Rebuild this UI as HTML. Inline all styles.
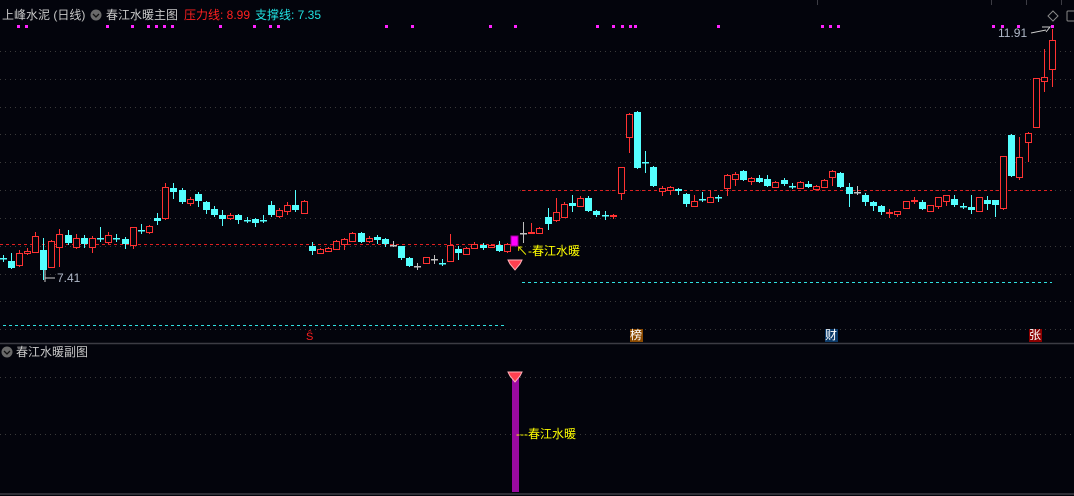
<!DOCTYPE html>
<html><head><meta charset="utf-8"><style>
html,body{margin:0;padding:0;background:#03040c;width:1074px;height:496px;overflow:hidden;font-family:"Liberation Sans","Noto Sans CJK SC",sans-serif}
svg{position:absolute;left:0;top:0}
.t{position:absolute;font-size:12px;white-space:nowrap;line-height:14px}
</style></head><body>
<svg id="s" width="1074" height="496" xmlns="http://www.w3.org/2000/svg">
<g stroke="#3a3a3a" stroke-dasharray="1 4" stroke-width="1">
<line x1="0" y1="51.5" x2="1074" y2="51.5"/><line x1="0" y1="79.5" x2="1074" y2="79.5"/>
<line x1="0" y1="107.5" x2="1074" y2="107.5"/><line x1="0" y1="134.5" x2="1074" y2="134.5"/>
<line x1="0" y1="162.5" x2="1074" y2="162.5"/><line x1="0" y1="190.5" x2="1074" y2="190.5"/>
<line x1="0" y1="218.5" x2="1074" y2="218.5"/><line x1="0" y1="246.5" x2="1074" y2="246.5"/>
<line x1="0" y1="274.5" x2="1074" y2="274.5"/><line x1="0" y1="301.5" x2="1074" y2="301.5"/>
<line x1="0" y1="329.5" x2="1074" y2="329.5"/>
<line x1="0" y1="377.5" x2="1074" y2="377.5"/><line x1="0" y1="434.5" x2="1074" y2="434.5"/>
</g>
<line x1="0" y1="343.5" x2="1074" y2="343.5" stroke="#3c3c44" stroke-width="1.5"/>
<line x1="0" y1="494" x2="1074" y2="494" stroke="#3c3c44" stroke-width="1.5"/>
<g stroke="#3c3c44"><line x1="817.5" y1="0" x2="817.5" y2="5"/><line x1="991.5" y1="0" x2="991.5" y2="5"/><line x1="1026.5" y1="0" x2="1026.5" y2="5"/><line x1="1061.5" y1="0" x2="1061.5" y2="5"/></g>
<line x1="0" y1="244.5" x2="510" y2="244.5" stroke="#e02020" stroke-dasharray="3 3"/>
<line x1="522" y1="190.5" x2="1052" y2="190.5" stroke="#e02020" stroke-dasharray="3 3"/>
<line x1="522" y1="282.5" x2="1052" y2="282.5" stroke="#30e0e0" stroke-dasharray="3 3"/>
<line x1="3" y1="325.5" x2="505" y2="325.5" stroke="#30e0e0" stroke-dasharray="3 3"/>
<g id="c"></g>
<g fill="#ff22ff" id="d"></g>
<rect x="511" y="236" width="7" height="10" fill="#ff00ff" stroke="#a000a0"/>
<rect x="512" y="378" width="7" height="114" fill="#9a0aa0"/>
<path d="M508 260 L522 260 L520 264 L515 270 L510 264 Z" fill="#ff4050" stroke="#ffb0b8" stroke-width="1"/>
<path d="M508 372 L522 372 L520 376 L515 382 L510 376 Z" fill="#ff4050" stroke="#ffb0b8" stroke-width="1"/>
<path d="M1048 16 l5 -5 l5 5 l-5 5 z" fill="none" stroke="#888"/>
<rect x="1067" y="11" width="8" height="10" fill="none" stroke="#888" rx="1"/>
<path d="M1031 33 L1046 30 M1042 27 L1050 27 L1046 32" stroke="#ccc" fill="none"/>
<path d="M45 270 L45 282 M45 278 L55 278" stroke="#ccc" fill="none"/>
<circle cx="96" cy="15" r="5.5" fill="#6a6a6a"/><path d="M93 14 l3 3 l3 -3" stroke="#111" fill="none" stroke-width="1.3"/>
<circle cx="7" cy="352" r="5.5" fill="#6a6a6a"/><path d="M4 351 l3 3 l3 -3" stroke="#111" fill="none" stroke-width="1.3"/>
<rect x="630" y="329" width="13" height="13" fill="#8b4a00"/>
<rect x="825" y="329" width="13" height="13" fill="#0b3a6a"/>
<rect x="1029" y="329" width="13" height="13" fill="#8b0000"/>
</svg>
<div class="t" style="left:2px;top:8px;color:#c8c8c8">上峰水泥 (日线)</div>
<div class="t" style="left:106px;top:8px;color:#c8c8c8">春江水暖主图</div>
<div class="t" style="left:184px;top:8px;color:#ff2020">压力线: 8.99</div>
<div class="t" style="left:255px;top:8px;color:#20e0e0">支撑线: 7.35</div>
<div class="t" style="left:998px;top:26px;color:#b0b8c8">11.91</div>
<div class="t" style="left:57px;top:271px;color:#b0b8c8">7.41</div>
<div class="t" style="left:516px;top:244px;color:#ffff00">↖-春江水暖</div>
<div class="t" style="left:516px;top:427px;color:#ffff00">---春江水暖</div>
<div class="t" style="left:16px;top:345px;color:#c8c8c8">春江水暖副图</div>
<div class="t" style="left:306px;top:330px;color:#ff2020;font-size:11px">Ŝ</div>
<div class="t" style="left:630px;top:329px;color:#fff;font-size:12px;line-height:13px">榜</div>
<div class="t" style="left:825px;top:329px;color:#fff;font-size:12px;line-height:13px">财</div>
<div class="t" style="left:1029px;top:329px;color:#fff;font-size:12px;line-height:13px">张</div>
<script>
var D=[
[3,258,258,255,262,'c'],[11,261,268,253,269,'c'],[19,253,265,250,267,'r'],[27,251,253,248,255,'r'],[35,236,252,232,253,'r'],
[43,250,270,238,280,'c'],[51,241,267,240,268,'r'],[59,234,247,229,267,'r'],[68,235,243,230,245,'c'],[76,238,247,234,249,'r'],
[84,238,244,235,248,'c'],[92,238,247,236,253,'r'],[100,238,238,227,242,'c'],[108,235,242,232,244,'r'],[116,238,238,234,242,'c'],
[125,239,244,237,249,'c'],[133,227,245,227,249,'r'],[141,230,230,224,234,'c'],[149,226,232,225,234,'r'],[157,218,221,213,225,'c'],
[165,187,218,183,220,'r'],[173,188,192,183,199,'c'],[182,190,202,188,204,'c'],[190,199,203,197,206,'r'],[198,194,201,192,207,'c'],
[206,202,210,201,214,'c'],[214,209,215,206,217,'c'],[222,215,219,210,226,'c'],[230,215,218,213,220,'r'],[238,215,220,214,224,'c'],
[247,220,220,217,223,'c'],[255,219,223,218,227,'c'],[263,220,220,215,223,'c'],[271,205,215,201,217,'c'],[279,210,216,208,218,'r'],
[287,205,211,202,215,'r'],[295,205,210,190,212,'c'],[304,201,213,200,214,'r'],
[312,246,251,242,255,'c'],[320,249,253,248,254,'r'],[328,248,251,247,252,'r'],[336,241,249,240,250,'r'],[344,239,244,238,250,'r'],
[352,233,241,232,242,'r'],[361,233,242,232,243,'c'],[369,238,241,236,243,'r'],[377,237,240,235,244,'c'],[385,239,244,238,247,'c'],
[393,245,245,241,247,'g'],[401,246,258,246,260,'c'],[409,258,266,257,267,'c'],[417,266,266,263,270,'g'],[426,257,263,257,264,'r'],
[434,259,259,255,264,'g'],[442,263,263,259,266,'c'],[450,245,261,234,261,'r'],[458,249,253,246,260,'c'],[466,248,254,247,255,'r'],
[474,244,248,242,249,'r'],[483,245,248,243,250,'c'],[491,245,247,244,248,'r'],[499,245,251,241,252,'c'],[507,244,251,243,253,'r'],
[523,233,233,222,243,'g'],[531,232,232,223,233,'r'],[539,228,233,227,234,'r'],[548,217,224,208,230,'c'],[556,212,220,198,222,'r'],
[564,204,217,202,218,'r'],[572,203,206,195,212,'c'],[580,198,206,196,207,'r'],[588,198,211,196,212,'c'],[596,211,215,210,217,'c'],
[605,215,215,211,220,'c'],[613,215,215,214,219,'r'],[621,167,193,167,200,'r'],[629,114,137,113,153,'r'],[637,112,168,111,169,'c'],
[645,162,162,151,173,'c'],[653,167,186,166,187,'c'],[662,188,191,186,196,'r'],[670,187,190,186,195,'r'],[678,189,191,188,195,'c'],
[686,194,204,193,207,'c'],[694,201,206,195,207,'r'],[702,199,199,192,202,'c'],[710,197,202,190,203,'r'],[718,197,197,195,202,'c'],
[727,175,188,174,196,'r'],[735,174,179,172,186,'r'],[743,171,180,170,181,'c'],[751,178,181,177,185,'r'],[759,178,182,175,183,'c'],
[767,179,186,175,187,'c'],[775,182,187,181,188,'r'],[784,180,184,178,186,'c'],[792,186,186,183,189,'c'],[800,182,188,181,189,'r'],
[808,184,187,181,188,'c'],[816,186,189,185,190,'r'],[824,180,187,179,188,'r'],[832,171,177,170,186,'r'],[840,173,187,172,188,'c'],
[849,187,194,183,207,'c'],[857,192,192,186,195,'g'],[865,195,202,193,206,'c'],[873,202,206,201,211,'c'],[881,206,212,205,215,'c'],
[889,212,212,209,218,'r'],[897,211,214,211,217,'r'],[906,201,208,201,209,'r'],[914,200,200,197,204,'r'],[922,202,209,200,210,'c'],
[930,205,211,205,211,'r'],[938,197,206,197,209,'r'],[946,195,201,195,206,'r'],[954,199,205,195,207,'c'],[963,206,206,203,209,'c'],
[971,207,210,195,214,'c'],[979,197,211,197,211,'r'],[987,200,204,196,210,'c'],[995,200,205,200,217,'c'],[1003,156,208,156,210,'r'],
[1011,135,176,134,177,'c'],[1019,157,177,137,180,'r'],[1028,133,142,132,162,'r'],[1036,78,127,78,128,'r'],[1044,77,81,49,92,'r'],
[1052,40,69,29,87,'r']];
var C={r:'#ff3232',c:'#54ffff',g:'#c0c0c0'},h='';
D.forEach(function(a){var x=a[0],col=C[a[5]];
h+='<line x1="'+(x+.5)+'" y1="'+a[3]+'" x2="'+(x+.5)+'" y2="'+a[4]+'" stroke="'+col+'"/>';
var hh=a[2]-a[1];
if(hh<2){h+='<rect x="'+(x-3)+'" y="'+a[1]+'" width="7" height="'+(a[5]=='r'?2:1.5)+'" fill="'+col+'"/>';}
else if(a[5]=='r'){h+='<rect x="'+(x-2.5)+'" y="'+(a[1]+.5)+'" width="6" height="'+hh+'" fill="#03040c" stroke="'+col+'"/>';}
else{h+='<rect x="'+(x-3)+'" y="'+a[1]+'" width="7" height="'+hh+'" fill="'+col+'"/>';}});
document.getElementById('c').innerHTML=h;
var dx=[18,26,107,132,148,156,164,172,220,254,270,278,386,412,490,515,597,613,622,630,635,718,822,830,838,993,1002,1018,1052],dh='';
dx.forEach(function(x){dh+='<rect x="'+(x-1)+'" y="25" width="3" height="3"/>';});
document.getElementById('d').innerHTML=dh;
</script>
</body></html>
